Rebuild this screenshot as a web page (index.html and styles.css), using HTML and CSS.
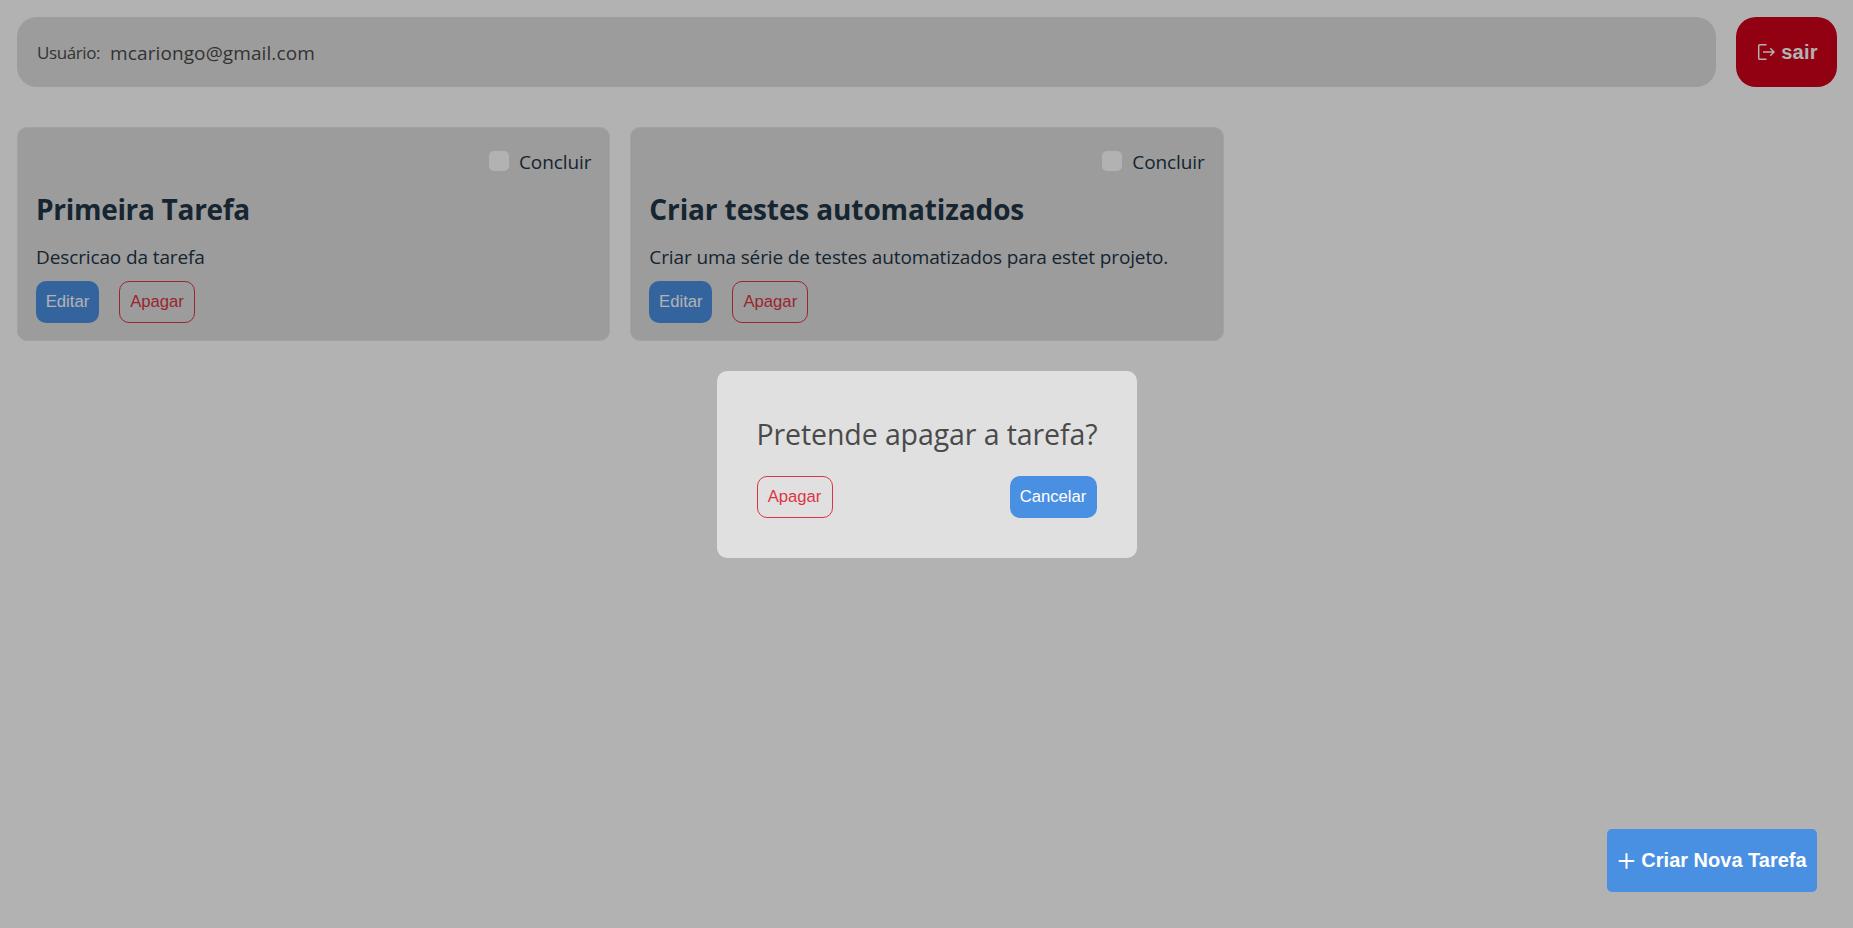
FILE: index.html
```html
<!DOCTYPE html>
<html lang="pt">
<head>
<meta charset="utf-8">
<title>Tarefas</title>
<link rel="stylesheet" href="styles.css">
</head>
<body>
<div class="page">
  <header class="top">
    <div class="user"><span class="user-label">Usuário:</span><span class="user-mail">mcariongo@gmail.com</span></div>
    <button class="logout">
      <svg width="18" height="18" viewBox="0 0 18 18" fill="none" stroke="currentColor" stroke-width="1.5"><path d="M9.5 1.7H2.8Q1.7 1.7 1.7 2.8V15.2Q1.7 16.3 2.8 16.3H9.5M6 9H17M13.3 5.2L17 9L13.3 12.8"/></svg>
      <span>sair</span>
    </button>
  </header>
  <main class="grid">
    <article class="card">
      <label class="check"><span class="box"></span><span class="check-text">Concluir</span></label>
      <h2 class="title title-a">Primeira Tarefa</h2>
      <p class="desc">Descricao da tarefa</p>
      <div class="actions"><button class="btn primary edit">Editar</button><button class="btn danger">Apagar</button></div>
    </article>
    <article class="card">
      <label class="check"><span class="box"></span><span class="check-text">Concluir</span></label>
      <h2 class="title title-b">Criar testes automatizados</h2>
      <p class="desc">Criar uma série de testes automatizados para estet projeto.</p>
      <div class="actions"><button class="btn primary edit">Editar</button><button class="btn danger">Apagar</button></div>
    </article>
  </main>
</div>
<div class="overlay">
  <section class="modal">
    <p class="question">Pretende apagar a tarefa?</p>
    <div class="modal-actions"><button class="btn danger">Apagar</button><button class="btn primary cancel">Cancelar</button></div>
  </section>
</div>
<button class="create">
  <svg width="18" height="18" viewBox="0 0 18 18" fill="none" stroke="currentColor" stroke-width="2" stroke-linecap="round"><path d="M9.5 2V16M2.5 9H16.5"/></svg>
  <span>Criar Nova Tarefa</span>
</button>
</body>
</html>
```
FILE: styles.css
```css
* { box-sizing: border-box; }
body { margin: 0; background: #fff; color: #213547; font-family: "Segoe UI", "Open Sans", "Noto Sans", sans-serif; }
button { font-family: Arial, "Liberation Sans", sans-serif; margin: 0; white-space: nowrap; }
.page { height: 928px; padding: 17px 16px 17px 17px; }
.top { display: flex; gap: 20px; height: 70px; }
.user { flex: 1; display: flex; align-items: center; gap: 10px; padding: 1px 20px 0; border-radius: 20px; background: #e0e0e0; color: #4a4a4a; }
.user-label { font-size: 17px; letter-spacing: -0.4px; }
.user-mail { font-size: 19px; letter-spacing: 0.1px; }
.logout { display: flex; align-items: center; justify-content: center; gap: 6px; width: 101px; padding: 0 0 0 2px; border: 0; border-radius: 20px; background: #d0021b; color: #fff; font-size: 20px; font-weight: 700; letter-spacing: 0.2px; }
.grid { display: grid; grid-template-columns: repeat(3, 1fr); gap: 20px; margin-top: 40px; }
.card { height: 214px; padding: 18px; border: 1px solid #e8e8e8; border-radius: 10px; background: #e0e0e0; }
.check { display: flex; justify-content: flex-end; align-items: center; gap: 10px; height: 30px; }
.box { width: 20px; height: 20px; border-radius: 5px; background: #fff; }
.check-text { font-size: 19px; line-height: 30px; padding-top: 1px; letter-spacing: -0.1px; }
.title { margin: 11px 0 0; font-size: 28px; line-height: 45px; font-weight: 700; }
.title-a { letter-spacing: -0.3px; }
.title-b { letter-spacing: -0.12px; }
.desc { margin: 10px 0 0; font-size: 19px; line-height: 30px; letter-spacing: -0.12px; }
.actions { display: flex; gap: 20px; margin-top: 9px; }
.btn { width: 76px; height: 42px; border-radius: 10px; font-size: 16.67px; padding: 0; }
.primary { border: 0; background: #4a90e2; color: #fff; }
.danger { border: 1px solid #dc3545; background: transparent; color: #dc3545; }
.edit { width: 63px; }
.cancel { width: 87px; }
.overlay { position: fixed; inset: 0; display: flex; align-items: center; justify-content: center; background: rgba(0, 0, 0, 0.3); }
.modal { width: 420px; height: 187px; padding: 40px; border-radius: 10px; background: #e0e0e0; }
.question { margin: 0; height: 45px; font-size: 28.5px; line-height: 47px; letter-spacing: -0.1px; color: #4a4a4a; white-space: nowrap; }
.modal-actions { display: flex; justify-content: space-between; margin-top: 20px; }
.create { position: fixed; right: 36px; bottom: 36px; display: flex; align-items: center; justify-content: center; gap: 6px; width: 210px; height: 63px; padding: 0; border: 0; border-radius: 5px; background: #4a90e2; color: #fff; font-size: 20px; font-weight: 700; }
```
